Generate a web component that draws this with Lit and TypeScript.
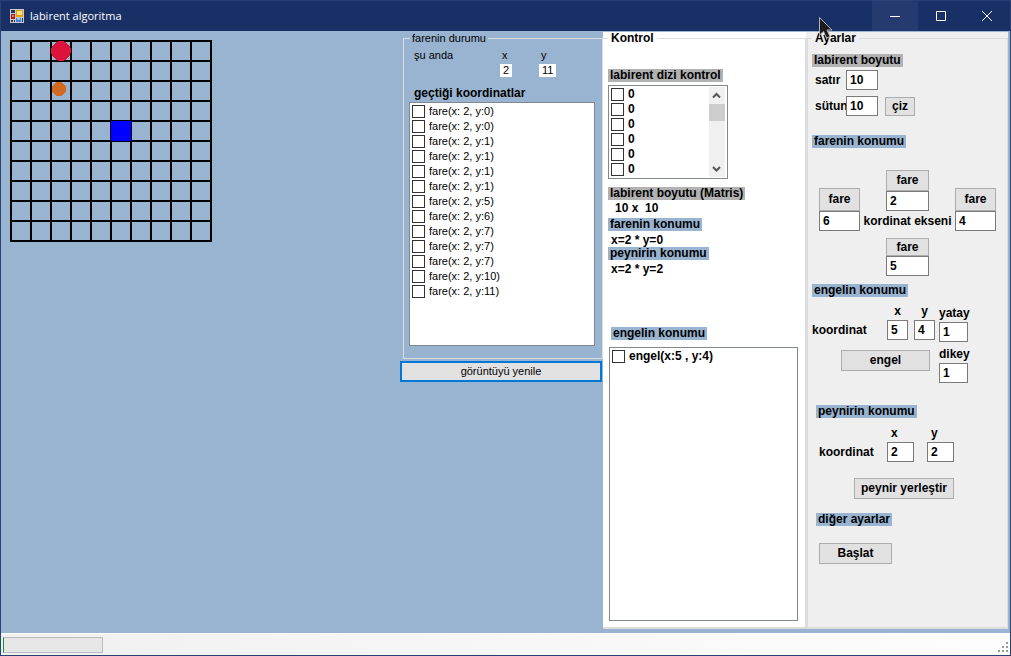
import { LitElement, html, css, svg } from "lit";
import { customElement, property } from "lit/decorators.js";

const VISITED = [
  [2, 0], [2, 0], [2, 1], [2, 1], [2, 1], [2, 1], [2, 5],
  [2, 6], [2, 7], [2, 7], [2, 7], [2, 10], [2, 11],
];

const controls = css`
  * { box-sizing: border-box; }
  button {
    font: inherit;
    color: #000;
    background: #e1e1e1;
    border: 1px solid #adadad;
    border-radius: 0;
    padding: 0;
    margin: 0;
    height: 21px;
    white-space: nowrap;
  }
  input[type="text"] {
    font: inherit;
    color: #000;
    background: #fff;
    border: 1px solid #7a7a7a;
    border-radius: 0;
    height: 20px;
    margin: 0;
    padding: 0 3px;
    outline: none;
  }
  input[type="checkbox"] {
    appearance: none;
    width: 13px;
    height: 13px;
    margin: 0;
    border: 1px solid #333;
    background: #fff;
    flex: none;
  }
  fieldset {
    margin: 0;
    border: 1px solid #dcdcdc;
    min-width: 0;
  }
  legend {
    padding: 0 2px;
    line-height: 13px;
  }
  .tag {
    display: block;
    width: fit-content;
    line-height: 13px;
    padding: 0 2px;
    background: #99b4d1;
    white-space: nowrap;
  }
  .tag.gray { background: #b2b2b2; }
`;

/* Maze board with the mouse, the cheese and one obstacle */
@customElement("maze-board")
export class MazeBoard extends LitElement {
  @property({ type: Number }) size = 10;
  static styles = css`
    :host { display: block; }
    svg { display: block; }
  `;
  render() {
    const n = this.size;
    const side = n * 20 + 2;
    const steps = Array.from({ length: n + 1 }, (_, i) => i * 20);
    return html`<svg width=${side} height=${side} shape-rendering="crispEdges" role="img" aria-label="labirent">
      ${steps.map((p) => svg`
        <rect x=${p} y="0" width="2" height=${side} fill="#000"></rect>
        <rect x="0" y=${p} width=${side} height="2" fill="#000"></rect>`)}
      <circle cx="51" cy="11" r="10" fill="#dc143c"></circle>
      <circle cx="49" cy="49" r="7" fill="#d2691e"></circle>
      <rect x="101" y="81" width="20" height="20" fill="#00f"></rect>
    </svg>`;
  }
}

@customElement("check-list")
export class CheckList extends LitElement {
  @property({ attribute: false }) items: string[] = [];
  @property({ type: Boolean }) scroll = false;
  static styles = [controls, css`
    :host {
      display: flex;
      background: #fff;
      border: 1px solid #828790;
      padding: 1px;
      box-sizing: border-box;
      overflow: hidden;
    }
    .rows { flex: 1; padding: 0 1px; }
    label {
      display: flex;
      align-items: center;
      gap: 4px;
      height: 15px;
      line-height: 15px;
      white-space: nowrap;
    }
    .bar {
      width: 16px;
      margin-right: 1px;
      background: #f0f0f0;
      display: flex;
      flex-direction: column;
      align-items: center;
    }
    .bar svg { flex: none; }
    .track { flex: 1; width: 100%; }
    .thumb { height: 17px; background: #cdcdcd; }
  `];
  render() {
    return html`
      <div class="rows">
        ${this.items.map((t) => html`<label><input type="checkbox" />${t}</label>`)}
      </div>
      ${this.scroll ? html`<div class="bar">
        <svg width="16" height="17" viewBox="0 0 16 17"><path d="M4 10.5L7.5 7L11 10.5" fill="none" stroke="#555" stroke-width="2"/></svg>
        <div class="track"><div class="thumb"></div></div>
        <svg width="16" height="17" viewBox="0 0 16 17"><path d="M4 7L7.5 10.5L11 7" fill="none" stroke="#555" stroke-width="2"/></svg>
      </div>` : ""}`;
  }
}

@customElement("app-root")
export class AppRoot extends LitElement {
  static styles = [controls, css`
    :host {
      display: flex;
      flex-direction: column;
      box-sizing: border-box;
      min-height: 100vh;
      border: 1px solid #2b4074;
      background: #99b4d1;
      color: #000;
      font: 11px/13px "Liberation Sans", Arial, sans-serif;
    }
    .titlebar {
      display: flex;
      align-items: center;
      height: 30px;
      background: #193067;
      color: #fff;
      font: 11px/16px "Open Sans", "Noto Sans", sans-serif;
    }
    .titlebar h1 { font: inherit; margin: 0; flex: 1; }
    .app-icon { margin: 0 6px 0 9px; flex: none; }
    .titlebar button {
      width: 46px;
      height: 30px;
      border: 0;
      background: none;
      display: grid;
      place-items: center;
    }
    .titlebar button.hover { background: #253b70; }
    .pointer { position: absolute; left: 818px; top: 16px; pointer-events: none; }

    main { flex: 1; display: flex; padding: 1px 2px 4px 0; }
    .board { flex: 1; padding: 8px 0 0 9px; }

    .status { width: 203px; display: flex; flex-direction: column; gap: 2px; }
    .status fieldset {
      height: 327px;
      margin-left: 3px;
      padding: 4px 7px 12px 5px;
    }
    .status legend { margin-left: 1px; }
    .now { display: grid; grid-template-columns: 86px 39px auto; padding-left: 5px; row-gap: 2px; justify-items: start; }
    .now span { padding: 0 2px; }
    .now span:first-child { padding: 0; }
    .now output { background: #fff; padding: 0 3px; grid-row: 2; }
    .now .ox { grid-column: 2; }
    .now .oy { grid-column: 3; }
    .bold, .panel { font: bold 12px/13px "Liberation Sans", Arial, sans-serif; }
    .status .bold { margin: 10px 0 2px 5px; }
    .status check-list { height: 244px; }
    .refresh { margin-right: 1px; border: 2px solid #0078d7; }

    .panel { width: 203px; background: #fff; display: flex; }
    .panel fieldset { flex: 1; display: flex; flex-direction: column; border-width: 1px 1px 2px 1px; }
    .kontrol fieldset { border-left: 0; padding: 24px 7px 6px 5px; }
    .panel legend { padding: 0 3px; }
    .panel.ayarlar { background: #efefef; width: 202px; }
    .ayarlar fieldset { padding: 9px 6px 6px 4px; border-left-width: 2px; }
    .panel p { margin: 0; line-height: 16px; padding: 1px 3px 0; height: 16px; white-space: pre; }
    .matrix { width: 120px; height: 94px; margin: 3px 0 8px; }
    .kontrol .size { padding: 0 7px; height: 18px; }
    .kontrol .obstacles { margin: 51px 0 7px 3px; }
    .kontrol .fill { flex: 1; margin-left: 1px; }

    .dims { display: grid; grid-template-columns: 31px 32px 37px; row-gap: 6px; align-items: center; margin: 3px 0 19px 3px; }
    .dims label { white-space: nowrap; grid-column: 1; }
    .dims input { width: 32px; }
    .dims button { justify-self: end; width: 30px; height: 19px; }

    .cross { display: flex; justify-content: space-between; margin: 22px 5px 8px 7px; }
    .pair { display: flex; flex-direction: column; width: 41px; }
    .cross .side { margin-top: 18px; }
    .side button { height: 23px; }
    .centre { display: flex; flex-direction: column; align-items: center; white-space: nowrap; }
    .centre span { margin: 4px 0 10px; }
    .centre .pair { width: 43px; }
    .centre .pair:last-child button { height: 18px; }

    .obstacle { display: flex; gap: 4px; margin: 8px 0 22px; }
    .coords { display: flex; align-items: flex-end; gap: 6px; }
    .coords > span { width: 70px; line-height: 20px; }
    .field { display: flex; flex-direction: column; gap: 2px; align-items: center; }
    .obstacle .coords input { width: 21px; }
    .obstacle .coords > span { width: 69px; }
    .obstacle > div > button { display: block; width: 89px; margin: 10px 0 0 29px; }
    .extra { display: flex; flex-direction: column; gap: 6px; padding-top: 2px; }
    .extra .field { align-items: flex-start; }
    .extra input { width: 29px; }
    .cheese { margin: 9px 0 14px 7px; width: 135px; display: flex; flex-direction: column; gap: 16px; }
    .cheese .coords { gap: 13px; justify-content: flex-end; }
    .cheese .coords > span { width: auto; flex: 1; }
    .cheese .field { align-items: flex-start; }
    .cheese label { padding-left: 4px; }
    .cheese input { width: 27px; }
    .cheese button { width: 100px; align-self: flex-end; }
    .inset { margin-left: 4px; }
    .start { width: 73px; margin: 17px 0 0 7px; }

    footer {
      display: flex;
      align-items: center;
      justify-content: space-between;
      height: 22px;
      padding: 0 2px;
      border-top: 1px solid #fff;
      background: linear-gradient(90deg, #f0f0f0, #fdfdfd);
    }
    progress {
      appearance: none;
      width: 100px;
      height: 16px;
      border: 1px solid #bcbcbc;
      border-left-color: #06a025;
      background: #e6e6e6;
    }
    progress::-webkit-progress-bar { background: #e6e6e6; }
    footer svg { align-self: flex-end; margin-bottom: 3px; }
  `];

  private field(label: string, id: string, value: string) {
    return html`<div class="field"><label for=${id}>${label}</label><input type="text" id=${id} .value=${value} /></div>`;
  }

  private move(value: string, dir: string, cls = "") {
    return html`<div class="pair ${cls}"><button>fare</button><input type="text" aria-label=${dir} .value=${value} /></div>`;
  }

  render() {
    return html`
      <header class="titlebar">
        <svg class="app-icon" width="14" height="14" viewBox="0 0 14 14" shape-rendering="crispEdges">
          <rect width="14" height="14" fill="#c9c9c9"/>
          <rect x="1" y="1" width="4" height="3" fill="#26365f"/>
          <rect x="1" y="5" width="4" height="5" fill="#b01818"/>
          <rect x="2" y="6" width="2" height="2" fill="#e8756a"/>
          <rect x="6" y="1" width="7" height="7" fill="#e0a010"/>
          <rect x="7" y="2" width="5" height="4" fill="#ffe27a"/>
          <rect x="6" y="9" width="5" height="4" fill="#3f7fdc"/>
          <rect x="7" y="9" width="3" height="2" fill="#8fc0ff"/>
          <rect x="1" y="11" width="2" height="2" fill="#26365f"/>
          <rect x="4" y="11" width="1" height="2" fill="#26365f"/>
          <rect x="12" y="9" width="1" height="4" fill="#26365f"/>
        </svg>
        <h1>labirent algoritma</h1>
        <button class="hover" aria-label="Simge durumuna küçült"><svg width="10" height="10"><path d="M0 5.5H10" stroke="#fff"/></svg></button>
        <button aria-label="Ekranı kapla"><svg width="10" height="10"><path d="M.5.5H9.5V9.5H.5Z" fill="none" stroke="#fff"/></svg></button>
        <button aria-label="Kapat"><svg width="10" height="10"><path d="M0 0L10 10M10 0L0 10" stroke="#fff"/></svg></button>
      </header>

      <main>
        <div class="board"><maze-board></maze-board></div>

        <section class="status">
          <fieldset>
            <legend>farenin durumu</legend>
            <div class="now">
              <span>şu anda</span><span>x</span><span>y</span>
              <output class="ox">2</output><output class="oy">11</output>
            </div>
            <div class="bold">geçtiği koordinatlar</div>
            <check-list .items=${VISITED.map(([x, y]) => `fare(x: ${x}, y:${y})`)}></check-list>
          </fieldset>
          <button class="refresh">görüntüyü yenile</button>
        </section>

        <section class="panel kontrol">
          <fieldset>
            <legend>Kontrol</legend>
            <span class="tag gray">labirent dizi kontrol</span>
            <check-list class="matrix" scroll .items=${Array(6).fill("0")}></check-list>
            <span class="tag gray">labirent boyutu (Matris)</span>
            <p class="size">10 x  10</p>
            <span class="tag">farenin konumu</span>
            <p>x=2 * y=0</p>
            <span class="tag">peynirin konumu</span>
            <p>x=2 * y=2</p>
            <span class="tag obstacles">engelin konumu</span>
            <check-list class="fill" .items=${["engel(x:5 , y:4)"]}></check-list>
          </fieldset>
        </section>

        <section class="panel ayarlar">
          <fieldset>
            <legend>Ayarlar</legend>
            <span class="tag gray">labirent boyutu</span>
            <div class="dims">
              <label for="rows">satır</label><input type="text" id="rows" .value=${"10"} />
              <label for="cols">sütun</label><input type="text" id="cols" .value=${"10"} />
              <button>çiz</button>
            </div>
            <span class="tag">farenin konumu</span>
            <div class="cross">
              ${this.move("6", "sol", "side")}
              <div class="centre">
                ${this.move("2", "yukarı")}
                <span>kordinat ekseni</span>
                ${this.move("5", "aşağı")}
              </div>
              ${this.move("4", "sağ", "side")}
            </div>
            <span class="tag">engelin konumu</span>
            <div class="obstacle">
              <div>
                <div class="coords">
                  <span>koordinat</span>
                  ${this.field("x", "ox", "5")}
                  ${this.field("y", "oy", "4")}
                </div>
                <button>engel</button>
              </div>
              <div class="extra">
                ${this.field("yatay", "horizontal", "1")}
                ${this.field("dikey", "vertical", "1")}
              </div>
            </div>
            <span class="tag inset">peynirin konumu</span>
            <div class="cheese">
              <div class="coords">
                <span>koordinat</span>
                ${this.field("x", "cx", "2")}
                ${this.field("y", "cy", "2")}
              </div>
              <button>peynir yerleştir</button>
            </div>
            <span class="tag inset">diğer ayarlar</span>
            <button class="start">Başlat</button>
          </fieldset>
        </section>
      </main>

      <footer>
        <progress value="0" max="100" aria-label="ilerleme"></progress>
        <svg width="10" height="10" fill="#999" shape-rendering="crispEdges">
          <rect x="8" y="0" width="2" height="2"/><rect x="4" y="4" width="2" height="2"/><rect x="8" y="4" width="2" height="2"/>
          <rect x="0" y="8" width="2" height="2"/><rect x="4" y="8" width="2" height="2"/><rect x="8" y="8" width="2" height="2"/>
        </svg>
      </footer>
      <svg class="pointer" width="16" height="24" viewBox="0 0 16 24"><path d="M1.500 1.500V19L5.500 15.500L8.500 22L12 20.500L9 14H14Z" fill="#1c1c1c" stroke="#b4b4b4"/></svg>
    `;
  }
}
